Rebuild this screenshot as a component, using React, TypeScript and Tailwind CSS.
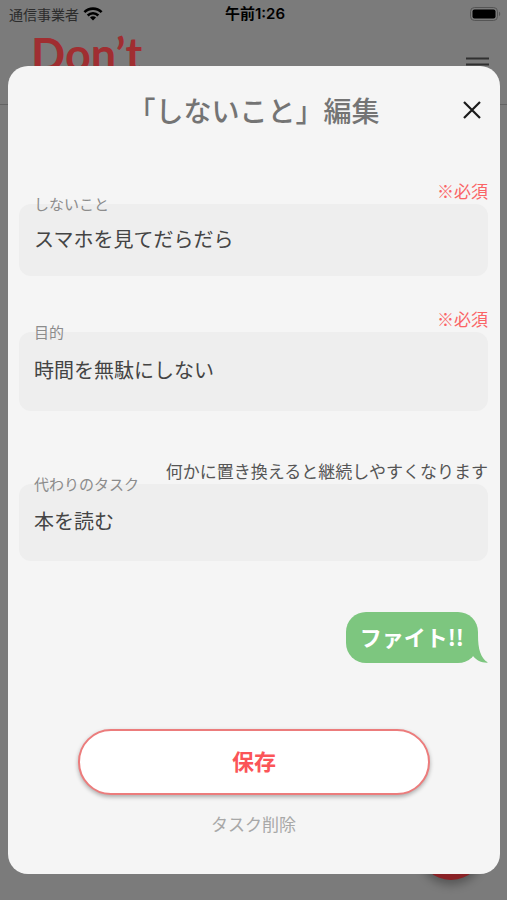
import { useState } from "react";

type FieldProps = {
  id: string;
  label: string;
  hint: string;
  hintClass: string;
  boxClass: string;
  initial: string;
};

function Field({ id, label, hint, hintClass, boxClass, initial }: FieldProps) {
  const [value, setValue] = useState(initial);
  return (
    <div className="relative">
      <p className={`text-right text-[17px] leading-[26px] ${hintClass}`}>{hint}</p>
      <label htmlFor={id} className="absolute top-4 left-[15px] text-[15px] leading-5 text-[#8c8c8c]">
        {label}
      </label>
      <input
        id={id}
        type="text"
        value={value}
        onChange={(e) => setValue(e.target.value)}
        className={`block w-full rounded-xl bg-[#eeeeee] px-[15px] text-[20px] text-[#444444] outline-none ${boxClass}`}
      />
    </div>
  );
}

function WifiIcon() {
  return (
    <svg width="20" height="14" viewBox="0 0 20 14" aria-hidden="true">
      <g fill="none" stroke="#000" strokeWidth="2.6">
        <path d="M1.4 5.2 A12.2 12.2 0 0 1 18.6 5.2" />
        <path d="M4.7 8.5 A7.5 7.5 0 0 1 15.3 8.5" />
      </g>
      <path d="M10 13.6 L7 10.6 A4.2 4.2 0 0 1 13 10.6 Z" fill="#000" />
    </svg>
  );
}

function BatteryIcon() {
  return (
    <svg width="31" height="14" viewBox="0 0 31 14" aria-hidden="true">
      <rect x="0.5" y="0.5" width="27" height="13" rx="4" fill="#7b7b7b" stroke="#555" />
      <rect x="2.5" y="2.5" width="23" height="9" rx="2" fill="#000" />
      <path d="M29 4.8 C30.6 5.4 30.6 8.6 29 9.2 Z" fill="#555" />
    </svg>
  );
}

export default function App() {
  return (
    <div className="relative min-h-screen bg-[#7b7b7b] font-['Noto_Sans_CJK_JP',sans-serif]">
      <div className="grid h-7 grid-cols-3 items-center pr-[6px] pl-[9px] text-[14px] leading-5">
        <div className="flex items-center gap-1 text-[#2c2c2c]">
          <span>通信事業者</span>
          <WifiIcon />
        </div>
        <p className="text-center font-['Inter','Noto_Sans_CJK_JP',sans-serif] text-[15px] font-semibold text-black">
          午前1:26
        </p>
        <div className="flex justify-end">
          <BatteryIcon />
        </div>
      </div>
      <header className="flex h-[77px] items-start justify-between border-b border-[#636363] pr-[18px] pl-[31px]">
        <p className="font-['Lato',sans-serif] text-[45px] leading-[52px] font-bold text-[#a02e31]">Don’t</p>
        <button type="button" aria-label="メニュー" className="mt-[29px]">
          <svg width="23" height="16" viewBox="0 0 23 16" stroke="#303030" strokeWidth="2.2" aria-hidden="true">
            <path d="M0 1.5H23M0 7.5H23M0 13.5H23" />
          </svg>
        </button>
      </header>
      <button
        type="button"
        aria-label="追加"
        className="absolute right-6 bottom-5 size-16 rounded-full bg-[#8a2226] shadow-[0_5px_10px_rgba(0,0,0,0.3)]"
      />

      <div className="absolute inset-x-0 top-0 pt-[66px] pr-[7px] pl-2">
        <div
          role="dialog"
          aria-labelledby="dialog-title"
          className="flex flex-col rounded-[20px] bg-[#f5f5f5] pt-[22px] pr-3 pb-[38px] pl-[11px]"
        >
          <div className="grid grid-cols-[32px_1fr_32px] items-center">
            <h1 id="dialog-title" className="col-start-2 text-center text-[28px] leading-[44px] font-medium text-[#747474]">
              「しないこと」編集
            </h1>
            <button type="button" aria-label="閉じる" className="flex size-8 items-center justify-center">
              <svg width="18" height="18" viewBox="0 0 18 18" stroke="#1a1a1a" strokeWidth="2.2" aria-hidden="true">
                <path d="M1 1L17 17M17 1L1 17" />
              </svg>
            </button>
          </div>

          <form className="mt-[46px] flex flex-col" onSubmit={(e) => e.preventDefault()}>
            <Field
              id="avoid"
              label="しないこと"
              hint="※必須"
              hintClass="text-[#fa6466]"
              boxClass="h-[72px] pb-1"
              initial="スマホを見てだらだら"
            />
            <div className="mt-[30px]">
              <Field
                id="purpose"
                label="目的"
                hint="※必須"
                hintClass="text-[#fa6466]"
                boxClass="h-[79px] pb-1"
                initial="時間を無駄にしない"
              />
            </div>
            <div className="mt-[47px]">
              <Field
                id="substitute"
                label="代わりのタスク"
                hint="何かに置き換えると継続しやすくなります"
                hintClass="text-[#555555]"
                boxClass="h-[77px] pb-1"
                initial="本を読む"
              />
            </div>

            <div className="relative mt-[51px] mr-[10px] flex h-[51px] items-center self-end rounded-[20px] bg-[#7dc67f] px-[14px] pb-1">
              <p className="text-[22px] leading-8 font-bold text-white">ファイト!!</p>
              <svg
                className="absolute -right-[10px] bottom-0"
                width="26"
                height="28"
                viewBox="0 0 26 28"
                fill="#7dc67f"
                aria-hidden="true"
              >
                <path d="M16 0 C16 14 18.5 23 26 27.6 C20 28 14.5 25.5 11 21 L4 14 Z" />
              </svg>
            </div>

            <button
              type="submit"
              className="mr-[58px] ml-[59px] mt-[66px] h-[66px] rounded-full border-2 border-[#ec7c7c] bg-white pb-1 text-[22px] leading-8 font-bold text-[#fb5558] shadow-[0_2px_4px_rgba(0,0,0,0.3)]"
            >
              保存
            </button>
            <button type="button" className="mt-[17px] self-center text-[17px] leading-6 text-[#a8a8a8]">
              タスク削除
            </button>
          </form>
        </div>
      </div>
    </div>
  );
}
